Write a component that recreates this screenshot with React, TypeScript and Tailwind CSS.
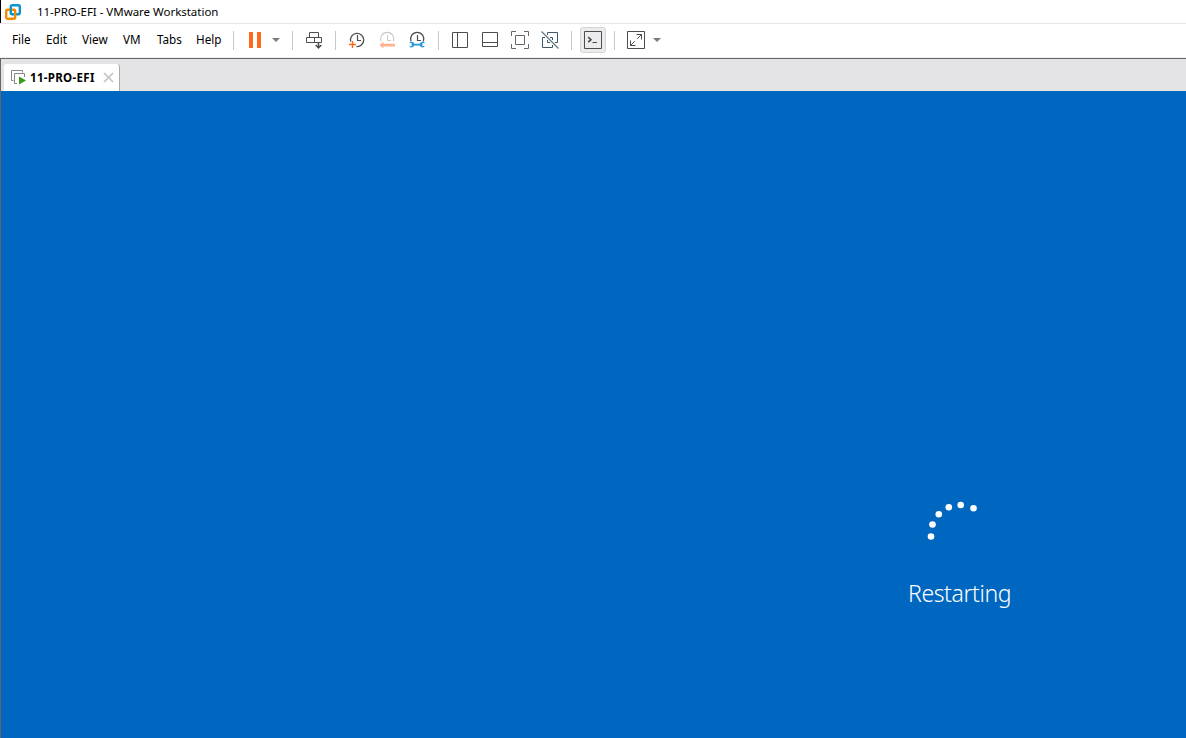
import type { ReactNode } from "react"

const menuItems = [
  { label: "File", width: "w-[34px]" },
  { label: "Edit", width: "w-[36px]" },
  { label: "View", width: "w-[41px]" },
  { label: "VM", width: "w-[34px]" },
  { label: "Tabs", width: "w-[39px]" },
  { label: "Help", width: "w-[37px]" },
]

const spinnerDots = [
  [931, 536.5],
  [932.5, 524.5],
  [938.8, 514.2],
  [948.8, 507.2],
  [960.7, 505],
  [973.5, 508.3],
]

function Icon({ children, color = "#4d4d4d" }: { children: ReactNode; color?: string }) {
  return (
    <svg width="20" height="20" viewBox="0 0 20 20" fill="none" stroke={color} className="shrink-0">
      {children}
    </svg>
  )
}

function Separator() {
  return <div className="mx-[11px] h-[19px] w-px shrink-0 bg-[#c8c8c8]" />
}

function DropArrow() {
  return (
    <svg width="10" height="10" viewBox="0 0 10 10" className="ml-[6px] shrink-0">
      <path d="M1 3h8L5 7z" fill="#7a7a7a" />
    </svg>
  )
}

function Logo() {
  return (
    <svg width="16" height="16" viewBox="0 0 16 16" fill="none" className="ml-[5px] shrink-0">
      <rect x="5.8" y="1.2" width="9" height="9" rx="1.4" stroke="#0a94d2" strokeWidth="2.4" />
      <rect x="1.2" y="5.7" width="9" height="9" rx="1.4" stroke="#f38b00" strokeWidth="2.4" />
      <path d="M5.8 4v4.5q0 1.7 1.6 1.7h1" stroke="#0a94d2" strokeWidth="2" />
    </svg>
  )
}

function Toolbar() {
  return (
    <div className="flex h-[33px] items-center bg-white pb-px pl-3">
      <div className="flex pb-[2px] text-[11.7px] leading-4">
        {menuItems.map((item) => (
          <div key={item.label} className={item.width}>
            {item.label}
          </div>
        ))}
      </div>
      <div className="h-[19px] w-px bg-[#c8c8c8]" />

      {/* Power */}
      <div className="ml-[11px] flex items-center">
        <Icon>
          <path d="M4 2h4v16H4zM12 2h4v16h-4z" fill="#ff671b" stroke="none" />
        </Icon>
        <DropArrow />
      </div>
      <Separator />
      <Icon>
        <path d="M5.5 7.5v-5h9v5M2.5 7.5h15v5h-15zM10.5 7.5v5" />
        <path d="M14.5 12v6M11.7 15l2.8 3 2.8-3" strokeWidth="1.5" />
      </Icon>
      <Separator />

      {/* Snapshots */}
      <div className="flex gap-[10px]">
        <Icon>
          <path d="M3.7 11.5A6.6 6.6 0 1 1 9.5 16.5" strokeWidth="1.3" />
          <path d="M10.5 5v5.5H14" strokeWidth="1.2" />
          <path d="M5.5 11v7M2 14.5h7" stroke="#ff671b" strokeWidth="1.4" />
        </Icon>
        <Icon color="#c9c9c9">
          <path d="M4 11.3A6.6 6.6 0 1 1 16.4 11.3" strokeWidth="1.2" />
          <path d="M10.5 5v5.5H14" />
          <path d="M2.5 15 6.5 11.8v2h11.5v2.6H6.5v2z" fill="#ffb28d" stroke="none" />
        </Icon>
        <Icon>
          <path d="M4 11.2A6.6 6.6 0 1 1 16.4 11.2" strokeWidth="1.3" />
          <path d="M10.5 5v5.5H14" strokeWidth="1.2" />
          <path
            d="M2 13a3 3 0 0 1 5.3.7h5.4a3 3 0 0 1 5.3-.8h-2.6v3.2H18a3 3 0 0 1-5.3-.6H7.3A3 3 0 0 1 2 16.2h2.6V13z"
            fill="#2699de"
            stroke="none"
          />
        </Icon>
      </div>
      <Separator />

      {/* View layout */}
      <div className="flex gap-[10px]">
        <Icon>
          <path d="M2.5 2.5h15v15h-15zM7.5 2.5v15" />
        </Icon>
        <Icon>
          <path d="M2.5 2.5h15v14h-15zM2.5 12.5h15" />
        </Icon>
        <Icon color="#666666">
          <path d="M1.5 6V1.5H6M14 1.5h4.5V6M18.5 14v4.5H14M6 18.5H1.5V14M5.5 5.5h9v9h-9z" />
        </Icon>
        <Icon color="#405767">
          <path d="M7.5 5V2.5h10v10H15M5 7.5H2.5v10h10V15M10 7.5h2.5V10M7.5 10v2.5H10" />
          <path d="M1.5 1.5l17 17" stroke="#657785" strokeWidth="1.2" />
        </Icon>
      </div>
      <div className="ml-[11px] mr-2 h-[19px] w-px bg-[#c8c8c8]" />
      <div className="flex size-[26px] items-center justify-center rounded-[3px] border border-[#d5d5d5] bg-[#ececee]">
        <Icon>
          <path d="M1.5 1.5h17v17h-17z" />
          <path d="M5.2 7.2 8 9.7l-2.8 2.5" strokeWidth="1.6" />
          <path d="M9.5 12.5H14" />
        </Icon>
      </div>
      <div className="ml-2 mr-[11px] h-[19px] w-px bg-[#c8c8c8]" />
      <Icon>
        <path d="M1.5 1.5h17v17h-17z" />
        <path d="M10.5 4.5h5v5M4.5 10.5v5h5M15.5 4.5l-4.3 4.3M4.5 15.5l4.3-4.3" />
      </Icon>
      <DropArrow />
    </div>
  )
}

function TabStrip() {
  return (
    <div className="flex h-8 items-end border-l border-[#666666] bg-[#e4e4e6] pl-[3px]">
      <div className="flex h-[27px] w-[116px] items-center rounded-t-[3px] border-r border-[#aaaaaa] bg-white">
        <svg width="15" height="15" viewBox="0 0 15 15" fill="none" className="ml-[7px] shrink-0">
          <path d="M2.5 10.5h-2V.5h11v2M6 13.5H3.5v-10h10V7" stroke="#858585" />
          <path d="M8 6.5v8l7-4z" fill="#3c9b18" />
        </svg>
        <div className="ml-[4px] w-[73px] whitespace-nowrap text-[11.5px] font-bold leading-4 tracking-[0.32px]">
          11-PRO-EFI
        </div>
        <svg width="11" height="11" viewBox="0 0 11 11" className="shrink-0" stroke="#c3c3c3" strokeWidth="1.7">
          <path d="M1 1l9 9M10 1l-9 9" />
        </svg>
      </div>
    </div>
  )
}

export default function App() {
  return (
    <div className="flex h-[738px] w-[1186px] flex-col overflow-hidden bg-white font-['Noto_Sans',sans-serif] text-black">
      <div className="flex h-[24px] items-center border-b border-[#e5e5e5]">
        <div className="h-[23px] w-px bg-black" />
        <div className="-ml-px flex items-center">
          <Logo />
          <span className="ml-4 text-[11.5px] leading-4 tracking-[-0.02px]">
            11-PRO-EFI - VMware Workstation
          </span>
        </div>
      </div>
      <Toolbar />
      <div className="h-[2px] border-b border-[#666666] bg-[#f0f0f0]" />
      <TabStrip />

      {/* Guest display */}
      <div className="relative flex-1 border-l border-[#666666] bg-[#0067c0]">
        <svg
          width="56"
          height="50"
          viewBox="925 495 56 50"
          fill="#ffffff"
          className="absolute left-[924px] top-[404px]"
        >
          {spinnerDots.map(([cx, cy]) => (
            <circle key={cx} cx={cx} cy={cy} r="3.3" />
          ))}
        </svg>
        <div className="absolute left-[907px] top-[486px] whitespace-nowrap text-[23px] font-light leading-8 tracking-[-0.4px] text-white">
          Restarting
        </div>
      </div>
    </div>
  )
}
